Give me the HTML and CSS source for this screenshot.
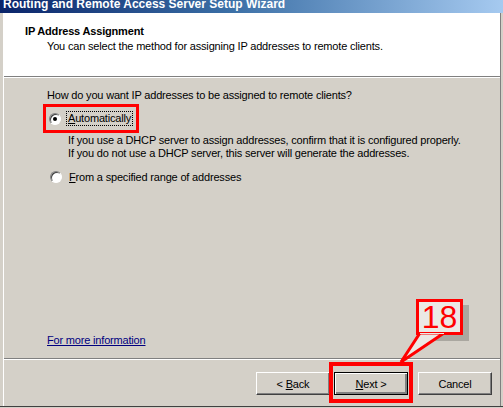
FILE: index.html
```html
<!DOCTYPE html>
<html lang="en">
<head>
    <meta charset="UTF-8">
    <title>Routing and Remote Access Server Setup Wizard</title>
    <link rel="stylesheet" href="styles.css">
</head>
<body>
    <div class="window">
        <div class="titlebar"><span>Routing and Remote Access Server Setup Wizard</span></div>
        <div class="frame">
            <div class="header">
                <h1>IP Address Assignment</h1>
                <p>You can select the method for assigning IP addresses to remote clients.</p>
            </div>
            <div class="content">
                <p class="question">How do you want IP addresses to be assigned to remote clients?</p>

                <div class="option first">
                    <span class="mark">
                        <span class="radio checked"></span>
                        <span class="label focus"><u>A</u>utomatically</span>
                    </span>
                </div>
                <p class="note">If you use a DHCP server to assign addresses, confirm that it is configured properly.<br>
                If you do not use a DHCP server, this server will generate the addresses.</p>

                <div class="option">
                    <span class="radio"></span>
                    <span class="label"><u>F</u>rom a specified range of addresses</span>
                </div>

                <a class="more" href="#">For more information</a>
            </div>
            <div class="footer">
                <button class="btn">&lt; <u>B</u>ack</button>
                <span class="highlight"><button class="btn default"><u>N</u>ext &gt;</button></span>
                <button class="btn cancel">Cancel</button>

                <div class="callout">
                    <div class="bubble">18</div>
                    <svg class="tail" width="60" height="32" viewBox="0 0 60 32">
                        <polygon points="22,0 46,0 3,29" fill="#ebe9e4" stroke="#ff0000" stroke-width="3" stroke-linejoin="miter"/>
                        <rect x="22" y="-4" width="24" height="5" fill="#ebe9e4"/>
                    </svg>
                </div>
            </div>
        </div>
    </div>
</body>
</html>
```

FILE: styles.css
```css
html, body {
    margin: 0;
    padding: 0;
}
body {
    width: 503px;
    height: 408px;
    overflow: hidden;
    background: #d4d0c8;
    font-family: "Liberation Sans", Arial, sans-serif;
    font-size: 11px;
    letter-spacing: -0.18px;
    color: #000;
}
.window {
    height: 406px;
    border-bottom: 1px solid #404040;
    display: flex;
    flex-direction: column;
}
.titlebar {
    height: 13px;
    overflow: hidden;
    background: linear-gradient(to right, #0a246a, #3a6ea5 45%, #a6caf0);
    color: #fff;
    font-weight: bold;
    font-size: 12px;
    letter-spacing: 0;
    padding-left: 3px;
}
.titlebar span {
    display: block;
    margin-top: -3px;
    line-height: 15px;
}
.frame {
    flex: 1;
    display: flex;
    flex-direction: column;
    margin: 0 2px 0 3px;
    border-left: 1px solid #ffffff;
    border-right: 1px solid #808080;
}
.header {
    background: #fff;
    height: 63px;
    border-bottom: 1px solid #808080;
    box-shadow: 0 1px 0 #fff;
    padding-left: 21px;
}
.header h1 {
    font-size: 11px;
    font-weight: bold;
    margin: 12px 0 0 0;
    line-height: 13px;
}
.header p {
    margin: 2px 0 0 22px;
    line-height: 13px;
}
.content {
    flex: 1;
    padding: 12px 0 0 43px;
    display: flex;
    flex-direction: column;
    align-items: flex-start;
}
.question {
    margin: 0;
    line-height: 13px;
}
.option {
    display: flex;
    align-items: center;
    height: 26px;
}
.option.first {
    height: auto;
    margin-top: 2px;
}
.mark {
    display: flex;
    align-items: center;
    margin-left: -4px;
    padding: 5px 4px 5px 3px;
    border: 3px solid #ff0000;
}
.radio {
    width: 12px;
    height: 12px;
    border-radius: 50%;
    box-sizing: border-box;
    border: 1px solid #808080;
    border-right-color: #fff;
    border-bottom-color: #fff;
    background: #fff;
    box-shadow: inset 1px 1px 0 #404040;
    position: relative;
    margin-left: 3px;
}
.mark .radio {
    margin-left: 0;
}
.radio.checked::after {
    content: "";
    position: absolute;
    left: 3px;
    top: 3px;
    width: 4px;
    height: 4px;
    border-radius: 50%;
    background: #000;
}
.label {
    margin-left: 6px;
    padding: 0 1px;
    line-height: 13px;
}
.label.focus {
    outline: 1px dotted #000;
}
.note {
    margin: 1px 0 5px 21px;
    line-height: 12.5px;
}
.more {
    margin-top: auto;
    margin-bottom: 11px;
    color: #00007f;
    text-decoration: underline;
    line-height: 13px;
}
.footer {
    position: relative;
    height: 48px;
    border-top: 1px solid #808080;
    box-shadow: inset 0 1px 0 #fff;
    display: flex;
    align-items: flex-start;
    padding: 13px 0 0 252px;
    box-sizing: border-box;
}
.btn {
    width: 74px;
    height: 23px;
    font-family: "Liberation Sans", Arial, sans-serif;
    font-size: 11px;
    letter-spacing: -0.18px;
    background: #d4d0c8;
    border: 1px solid;
    border-color: #fff #404040 #404040 #fff;
    box-shadow: inset -1px -1px 0 #808080;
    padding: 0;
    color: #000;
}
.btn.default {
    border: 1px solid #000;
    box-shadow: inset 1px 1px 0 #fff, inset -2px -2px 0 #808080;
}
.highlight {
    display: inline-block;
    margin: -10px 3px 0 -1px;
    padding: 6px 1px 4px 1px;
    border: 4px solid #ff0000;
    height: 23px;
}
.highlight .btn {
    display: block;
}
.cancel {
    margin-left: 2px;
}
.callout {
    position: absolute;
    left: 394px;
    top: -60px;
    width: 70px;
    height: 66px;
}
.bubble {
    position: absolute;
    left: 18px;
    top: 0;
    width: 41px;
    height: 30px;
    border: 3px solid #ff0000;
    background: #ebe9e4;
    box-shadow: 6px 6px 0 #aaa7a0;
    color: #ff0000;
    font-size: 32px;
    letter-spacing: 0;
    line-height: 31px;
    text-align: center;
    z-index: 1;
}
.tail {
    position: absolute;
    left: 0;
    top: 34px;
    z-index: 2;
}
```
